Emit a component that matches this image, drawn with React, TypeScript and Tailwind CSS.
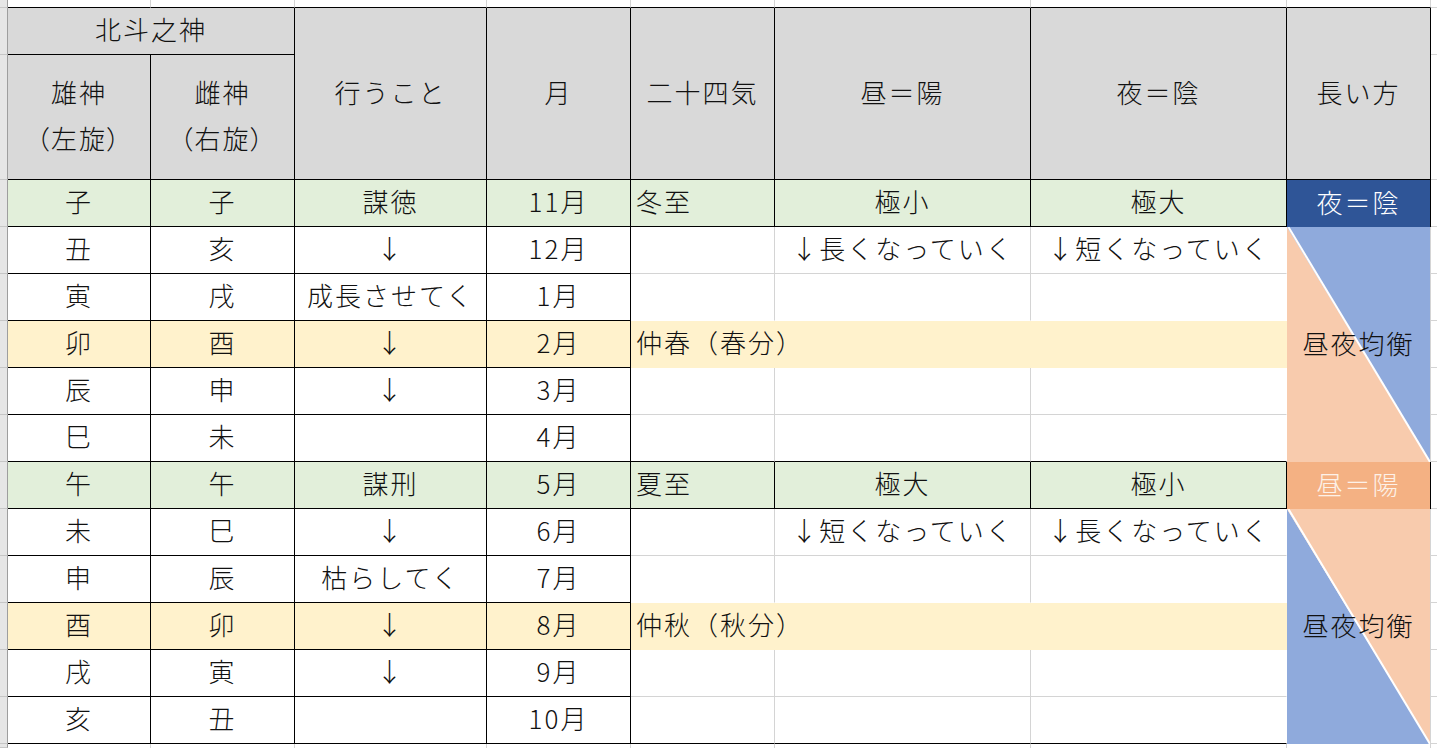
import React from "react";

type Row = {
  a: string;
  b: string;
  c: string;
  m: string;
  kind?: "green" | "yellow";
  q?: string;
  d?: string;
  n?: string;
};

const rows: Row[] = [
  { a: "子", b: "子", c: "謀徳", m: "11月", kind: "green", q: "冬至", d: "極小", n: "極大" },
  { a: "丑", b: "亥", c: "↓", m: "12月", d: "↓長くなっていく", n: "↓短くなっていく" },
  { a: "寅", b: "戌", c: "成長させてく", m: "1月" },
  { a: "卯", b: "酉", c: "↓", m: "2月", kind: "yellow", q: "仲春（春分）" },
  { a: "辰", b: "申", c: "↓", m: "3月" },
  { a: "巳", b: "未", c: "", m: "4月" },
  { a: "午", b: "午", c: "謀刑", m: "5月", kind: "green", q: "夏至", d: "極大", n: "極小" },
  { a: "未", b: "巳", c: "↓", m: "6月", d: "↓短くなっていく", n: "↓長くなっていく" },
  { a: "申", b: "辰", c: "枯らしてく", m: "7月" },
  { a: "酉", b: "卯", c: "↓", m: "8月", kind: "yellow", q: "仲秋（秋分）" },
  { a: "戌", b: "寅", c: "↓", m: "9月" },
  { a: "亥", b: "丑", c: "", m: "10月" },
];

const strip = "bg-[#e6e6e6] border-r border-b border-r-[#9e9e9e] border-b-[#c6c6c6]";
const edge = "bg-white border-b border-b-[#d4d4d4]";
const boxed = "flex items-center justify-center pb-[5px] border-r border-b border-black";
const head = "flex items-center justify-center pb-[5px] border-r border-b border-black bg-[#d9d9d9]";

// Diagonal split cell in the 長い方 column (peach / blue triangles)
function Diagonal({ flip }: { flip?: boolean }) {
  const lower = flip ? "#8faadc" : "#f8cbad";
  const upper = flip ? "#f8cbad" : "#8faadc";
  return (
    <div className="relative row-span-5 flex items-center justify-center pb-[5px] border-r border-r-[#d4d4d4]">
      <svg className="absolute inset-0 h-full w-full" viewBox="0 0 100 100" preserveAspectRatio="none">
        <polygon points="0,0 100,100 0,100" fill={lower} />
        <polygon points="0,0 100,0 100,100" fill={upper} />
        <line x1="1" y1="0" x2="100" y2="100" stroke="#ffffff" strokeWidth="2" vectorEffect="non-scaling-stroke" />
      </svg>
      <span className="relative">昼夜均衡</span>
    </div>
  );
}

function DataRow({ r, i }: { r: Row; i: number }) {
  const fill = r.kind === "green" ? "bg-[#e2efda]" : r.kind === "yellow" ? "bg-[#fff2cc]" : "bg-white";
  const lastInBlock = i === 5 || i === 11;
  const beforeYellow = i === 2 || i === 8;
  const grid = lastInBlock
    ? "border-r border-b border-r-[#d4d4d4] border-b-black"
    : beforeYellow
      ? "border-r border-b border-r-[#d4d4d4] border-b-white"
      : "border-r border-b border-[#d4d4d4]";
  const lastCol = lastInBlock
    ? "border-r border-b border-r-white border-b-black"
    : beforeYellow
      ? "border-r border-b border-white"
      : "border-r border-b border-r-white border-b-[#d4d4d4]";

  return (
    <>
      <div className={strip} />
      <div className={`${boxed} ${fill}`}>{r.a}</div>
      <div className={`${boxed} ${fill}`}>{r.b}</div>
      <div className={`${boxed} ${fill}`}>{r.c}</div>
      <div className={`${boxed} ${fill}`}>{r.m}</div>
      {r.kind === "yellow" ? (
        <div className="col-span-3 flex items-center pb-[5px] border-r border-b border-[#fff2cc] bg-[#fff2cc] pl-[5px]">{r.q}</div>
      ) : r.kind === "green" ? (
        <>
          <div className="flex items-center pb-[5px] border-r border-b border-black bg-[#e2efda] pl-[5px]">{r.q}</div>
          <div className={`${boxed} bg-[#e2efda]`}>{r.d}</div>
          <div className={`${boxed} bg-[#e2efda]`}>{r.n}</div>
        </>
      ) : (
        <>
          <div className={`flex items-center pb-[5px] pl-[5px] ${grid}`}>{r.q}</div>
          <div className={`flex items-center justify-center pb-[5px] ${grid}`}>{r.d}</div>
          <div className={`flex items-center justify-center pb-[5px] ${lastCol}`}>{r.n}</div>
        </>
      )}
      {i === 0 && (
        <div className="flex items-center justify-center pb-[5px] border-r border-black bg-[#2f5597] text-white">夜＝陰</div>
      )}
      {i === 1 && <Diagonal />}
      {i === 6 && (
        <div className="flex items-center justify-center pb-[5px] border-r border-black bg-[#f4b183] text-[#fdf1e8]">昼＝陽</div>
      )}
      {i === 7 && <Diagonal flip />}
      <div className={edge} />
    </>
  );
}

export default function App() {
  return (
    <div className="grid h-[748px] w-[1437px] grid-cols-[8px_143px_144px_192px_144px_144px_256px_256px_144px_1fr] grid-rows-[8px_47px_125px_repeat(12,47px)_1fr] overflow-hidden bg-white font-['Noto_Sans_CJK_JP',sans-serif] text-[26px] font-light tracking-[2px] text-[#111]">
      {/* top filler row */}
      <div className={strip} />
      {Array.from({ length: 8 }).map((_, k) => (
        <div key={k} className="border-r border-b border-r-[#d4d4d4] border-b-black" />
      ))}
      <div className={edge} />

      {/* header */}
      <div className={strip} />
      <div className={`${head} col-span-2`}>北斗之神</div>
      <div className={`${head} row-span-2`}>行うこと</div>
      <div className={`${head} row-span-2`}>月</div>
      <div className={`${head} row-span-2`}>二十四気</div>
      <div className={`${head} row-span-2`}>昼＝陽</div>
      <div className={`${head} row-span-2`}>夜＝陰</div>
      <div className={`${head} row-span-2`}>長い方</div>
      <div className={edge} />

      <div className={strip} />
      <div className={`${head} flex-col leading-[46px]`}>
        <span>雄神</span>
        <span className="[font-feature-settings:'palt']">（左旋）</span>
      </div>
      <div className={`${head} flex-col leading-[46px]`}>
        <span>雌神</span>
        <span className="[font-feature-settings:'palt']">（右旋）</span>
      </div>
      <div className={edge} />

      {rows.map((r, i) => (
        <DataRow key={i} r={r} i={i} />
      ))}

      {/* bottom filler row */}
      <div className={strip} />
      {Array.from({ length: 8 }).map((_, k) => (
        <div key={k} className="border-r border-r-[#d4d4d4]" />
      ))}
      <div className="bg-white" />
    </div>
  );
}
